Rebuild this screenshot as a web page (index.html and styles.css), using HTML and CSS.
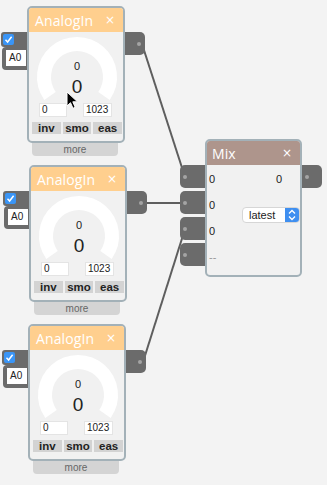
FILE: index.html
```html
<!DOCTYPE html>
<html lang="en">
<head>
  <meta charset="UTF-8">
  <title>Analog mix</title>
  <link rel="stylesheet" href="styles.css">
</head>
<body>

<div class="canvas">
  <!--连线-->
  <svg class="wires" width="327" height="485">
    <line x1="142" y1="44" x2="185" y2="177"/>
    <line x1="140" y1="203" x2="185" y2="203"/>
    <line x1="143" y1="362" x2="185" y2="229"/>
  </svg>

  <!--AnalogIn 1-->
  <div class="node analog n1">
    <div class="port-check"><span class="check"><svg width="11" height="11" viewBox="0 0 11 11"><polyline points="2.5,5.8 4.6,8 8.6,2.8"/></svg></span></div>
    <div class="port-pin"><span class="pin">A0</span></div>
    <div class="port-out"><i class="dot"></i></div>
    <div class="head"><span class="title">AnalogIn</span><span class="close">×</span></div>
    <div class="body">
      <svg class="gauge" width="94" height="71" viewBox="0 0 94 71">
        <path d="M21 63.9 A33 33 0 1 1 75 63.9"/>
        <text x="48" y="38" class="g-small">0</text>
        <text x="48" y="61" class="g-big">0</text>
      </svg>
      <div class="range"><span class="field">0</span><span class="field">1023</span></div>
      <div class="toggles"><span>inv</span><span>smo</span><span>eas</span></div>
    </div>
    <div class="more">more</div>
  </div>

  <!--AnalogIn 2-->
  <div class="node analog n2">
    <div class="port-check"><span class="check"><svg width="11" height="11" viewBox="0 0 11 11"><polyline points="2.5,5.8 4.6,8 8.6,2.8"/></svg></span></div>
    <div class="port-pin"><span class="pin">A0</span></div>
    <div class="port-out"><i class="dot"></i></div>
    <div class="head"><span class="title">AnalogIn</span><span class="close">×</span></div>
    <div class="body">
      <svg class="gauge" width="94" height="71" viewBox="0 0 94 71">
        <path d="M21 63.9 A33 33 0 1 1 75 63.9"/>
        <text x="48" y="38" class="g-small">0</text>
        <text x="48" y="61" class="g-big">0</text>
      </svg>
      <div class="range"><span class="field">0</span><span class="field">1023</span></div>
      <div class="toggles"><span>inv</span><span>smo</span><span>eas</span></div>
    </div>
    <div class="more">more</div>
  </div>

  <!--AnalogIn 3-->
  <div class="node analog n3">
    <div class="port-check"><span class="check"><svg width="11" height="11" viewBox="0 0 11 11"><polyline points="2.5,5.8 4.6,8 8.6,2.8"/></svg></span></div>
    <div class="port-pin"><span class="pin">A0</span></div>
    <div class="port-out"><i class="dot"></i></div>
    <div class="head"><span class="title">AnalogIn</span><span class="close">×</span></div>
    <div class="body">
      <svg class="gauge" width="94" height="71" viewBox="0 0 94 71">
        <path d="M21 63.9 A33 33 0 1 1 75 63.9"/>
        <text x="48" y="38" class="g-small">0</text>
        <text x="48" y="61" class="g-big">0</text>
      </svg>
      <div class="range"><span class="field">0</span><span class="field">1023</span></div>
      <div class="toggles"><span>inv</span><span>smo</span><span>eas</span></div>
    </div>
    <div class="more">more</div>
  </div>

  <!--Mix-->
  <div class="node mix">
    <div class="mport p1"><i class="dot"></i></div>
    <div class="mport p2"><i class="dot"></i></div>
    <div class="mport p3"><i class="dot"></i></div>
    <div class="mport p4"><i class="dot"></i></div>
    <div class="port-out"><i class="dot"></i></div>
    <div class="head"><span class="title">Mix</span><span class="close">×</span></div>
    <div class="mix-body">
      <ul class="inputs">
        <li>0</li>
        <li>0</li>
        <li>0</li>
        <li class="empty">--</li>
      </ul>
      <div class="outputs">
        <div class="out-val">0</div>
        <div class="select">
          <span class="select-text">latest</span>
          <span class="select-arrows"><svg width="14" height="16" viewBox="0 0 14 16"><polyline points="4,6.5 7,3.5 10,6.5"/><polyline points="4,9.5 7,12.5 10,9.5"/></svg></span>
        </div>
      </div>
    </div>
  </div>

  <!--鼠标-->
  <svg class="cursor" width="13" height="19" viewBox="0 0 13 19">
    <path d="M1 1 L1 15 L4.5 11.7 L7 17.3 L9.2 16.3 L6.8 10.8 L11.5 10.8 Z"/>
  </svg>
</div>

</body>
</html>
```

FILE: styles.css
```css
*{
  margin: 0;
  padding: 0;
  box-sizing: border-box;
}
body{
  background: #f3f3f3;
}
ul{
  list-style: none;
}
.canvas{
  position: relative;
  width: 327px;
  height: 485px;
  overflow: hidden;
  background: #f3f3f3;
  font-family: "Liberation Sans", Arial, sans-serif;
  color: #222;
}
.wires{
  position: absolute;
  left: 0;
  top: 0;
}
.wires line{
  stroke: #5e5e5e;
  stroke-width: 2;
}

/* 节点 */
.node{
  position: absolute;
  border: 2px solid #a3b1b8;
  border-radius: 5px;
  background: #f1f1f1;
}
.analog{
  width: 98px;
  height: 137px;
}
.n1{ left: 27px; top: 6px; }
.n2{ left: 29px; top: 165px; }
.n3{ left: 28px; top: 324px; }
.mix{
  left: 205px;
  top: 139px;
  width: 97px;
  height: 138px;
}
.head{
  display: flex;
  align-items: center;
  justify-content: space-between;
  height: 24px;
  padding: 0 8px 0 6px;
  background: #ffcf8e;
  border-radius: 3px 3px 0 0;
  color: #fff;
}
.mix .head{
  background: #ae958c;
  padding-left: 5px;
}
.title{
  font-family: "Open Sans", sans-serif;
  font-size: 14px;
  letter-spacing: .1px;
}
.close{
  font-family: "DejaVu Sans", sans-serif;
  font-size: 12px;
}

/* 仪表 */
.gauge{
  display: block;
}
.gauge path{
  fill: none;
  stroke: #fff;
  stroke-width: 14;
}
.gauge text{
  text-anchor: middle;
  fill: #222;
  font-family: "Liberation Sans", Arial, sans-serif;
}
.g-small{ font-size: 11px; }
.g-big{ font-size: 19px; }
.range{
  display: flex;
  justify-content: space-between;
  padding: 0 11px 0 10px;
}
.field{
  width: 28px;
  height: 14px;
  padding-left: 2px;
  background: #fff;
  border: 1px solid #e4e4e4;
  font-size: 10px;
  line-height: 12px;
}
.field + .field{
  width: 29px;
}
.toggles{
  display: flex;
  gap: 2px;
  margin-top: 5px;
  padding: 0 1px 0 3px;
}
.toggles span{
  flex: 1;
  height: 12px;
  background: #d3d3d3;
  font-size: 11.5px;
  font-weight: bold;
  line-height: 12px;
  text-align: center;
  color: #222;
}
.more{
  position: absolute;
  top: calc(100% + 2px);
  left: 3px;
  width: 86px;
  height: 13px;
  background: #d4d4d4;
  border-radius: 0 0 4px 4px;
  font-size: 10px;
  line-height: 13px;
  text-align: center;
  color: #666;
}

/* 端口 */
.port-check,.port-pin,.port-out,.mport{
  position: absolute;
  background: #6b6b6b;
}
.port-check{
  left: -28px;
  top: 24px;
  width: 26px;
  height: 15px;
  border-radius: 3px 0 0 3px;
}
.check{
  display: block;
  width: 11px;
  height: 11px;
  margin: 2px 0 0 2px;
  background: #3a95f6;
  border-radius: 2px;
}
.check svg{
  display: block;
}
.check polyline{
  fill: none;
  stroke: #fff;
  stroke-width: 1.5;
}
.port-pin{
  left: -27px;
  top: 39px;
  width: 25px;
  height: 23px;
  padding: 3px 0 0 4px;
  border-radius: 4px 0 0 4px;
}
.pin{
  display: block;
  width: 20px;
  height: 16px;
  padding-left: 3px;
  background: #fff;
  font-size: 10px;
  line-height: 16px;
}
.port-out{
  left: calc(100% + 2px);
  top: 24px;
  width: 20px;
  height: 23px;
  border-radius: 0 5px 5px 0;
}
.dot{
  position: absolute;
  top: 10px;
  left: 12px;
  width: 4px;
  height: 4px;
  border-radius: 50%;
  background: #a4a4a4;
}
.mix .port-out .dot{
  left: 3px;
}
.mport{
  left: -27px;
  width: 25px;
  height: 23px;
  border-radius: 5px 0 0 5px;
}
.mport .dot{
  left: 3px;
}
.p1{ top: 24px; }
.p2{ top: 50px; }
.p3{ top: 76px; }
.p4{ top: 102px; }

/* Mix 内容 */
.mix-body{
  display: flex;
  justify-content: space-between;
  padding-top: 1px;
  font-size: 11px;
  color: #222;
}
.inputs li{
  height: 26px;
  line-height: 26px;
  padding-left: 2px;
  color: #222;
}
.inputs .empty{
  color: #999;
}
.outputs{
  display: flex;
  flex-direction: column;
  align-items: flex-end;
}
.out-val{
  height: 26px;
  line-height: 26px;
  padding-right: 18px;
  color: #222;
}
.select{
  display: flex;
  width: 58px;
  height: 16px;
  margin-top: 15px;
  background: #fff;
  border: 1px solid #d6d6d6;
  border-radius: 4px;
  overflow: hidden;
}
.select-text{
  flex: 1;
  padding-left: 6px;
  font-size: 11px;
  line-height: 14px;
  color: #222;
}
.select-arrows{
  width: 14px;
  background: #3f8ff0;
}
.select-arrows svg{
  display: block;
  margin-top: -1px;
}
.select-arrows polyline{
  fill: none;
  stroke: #fff;
  stroke-width: 1.3;
}
.cursor{
  position: absolute;
  left: 66px;
  top: 91px;
}
.cursor path{
  fill: #000;
  stroke: #fff;
  stroke-width: 1;
}
```
